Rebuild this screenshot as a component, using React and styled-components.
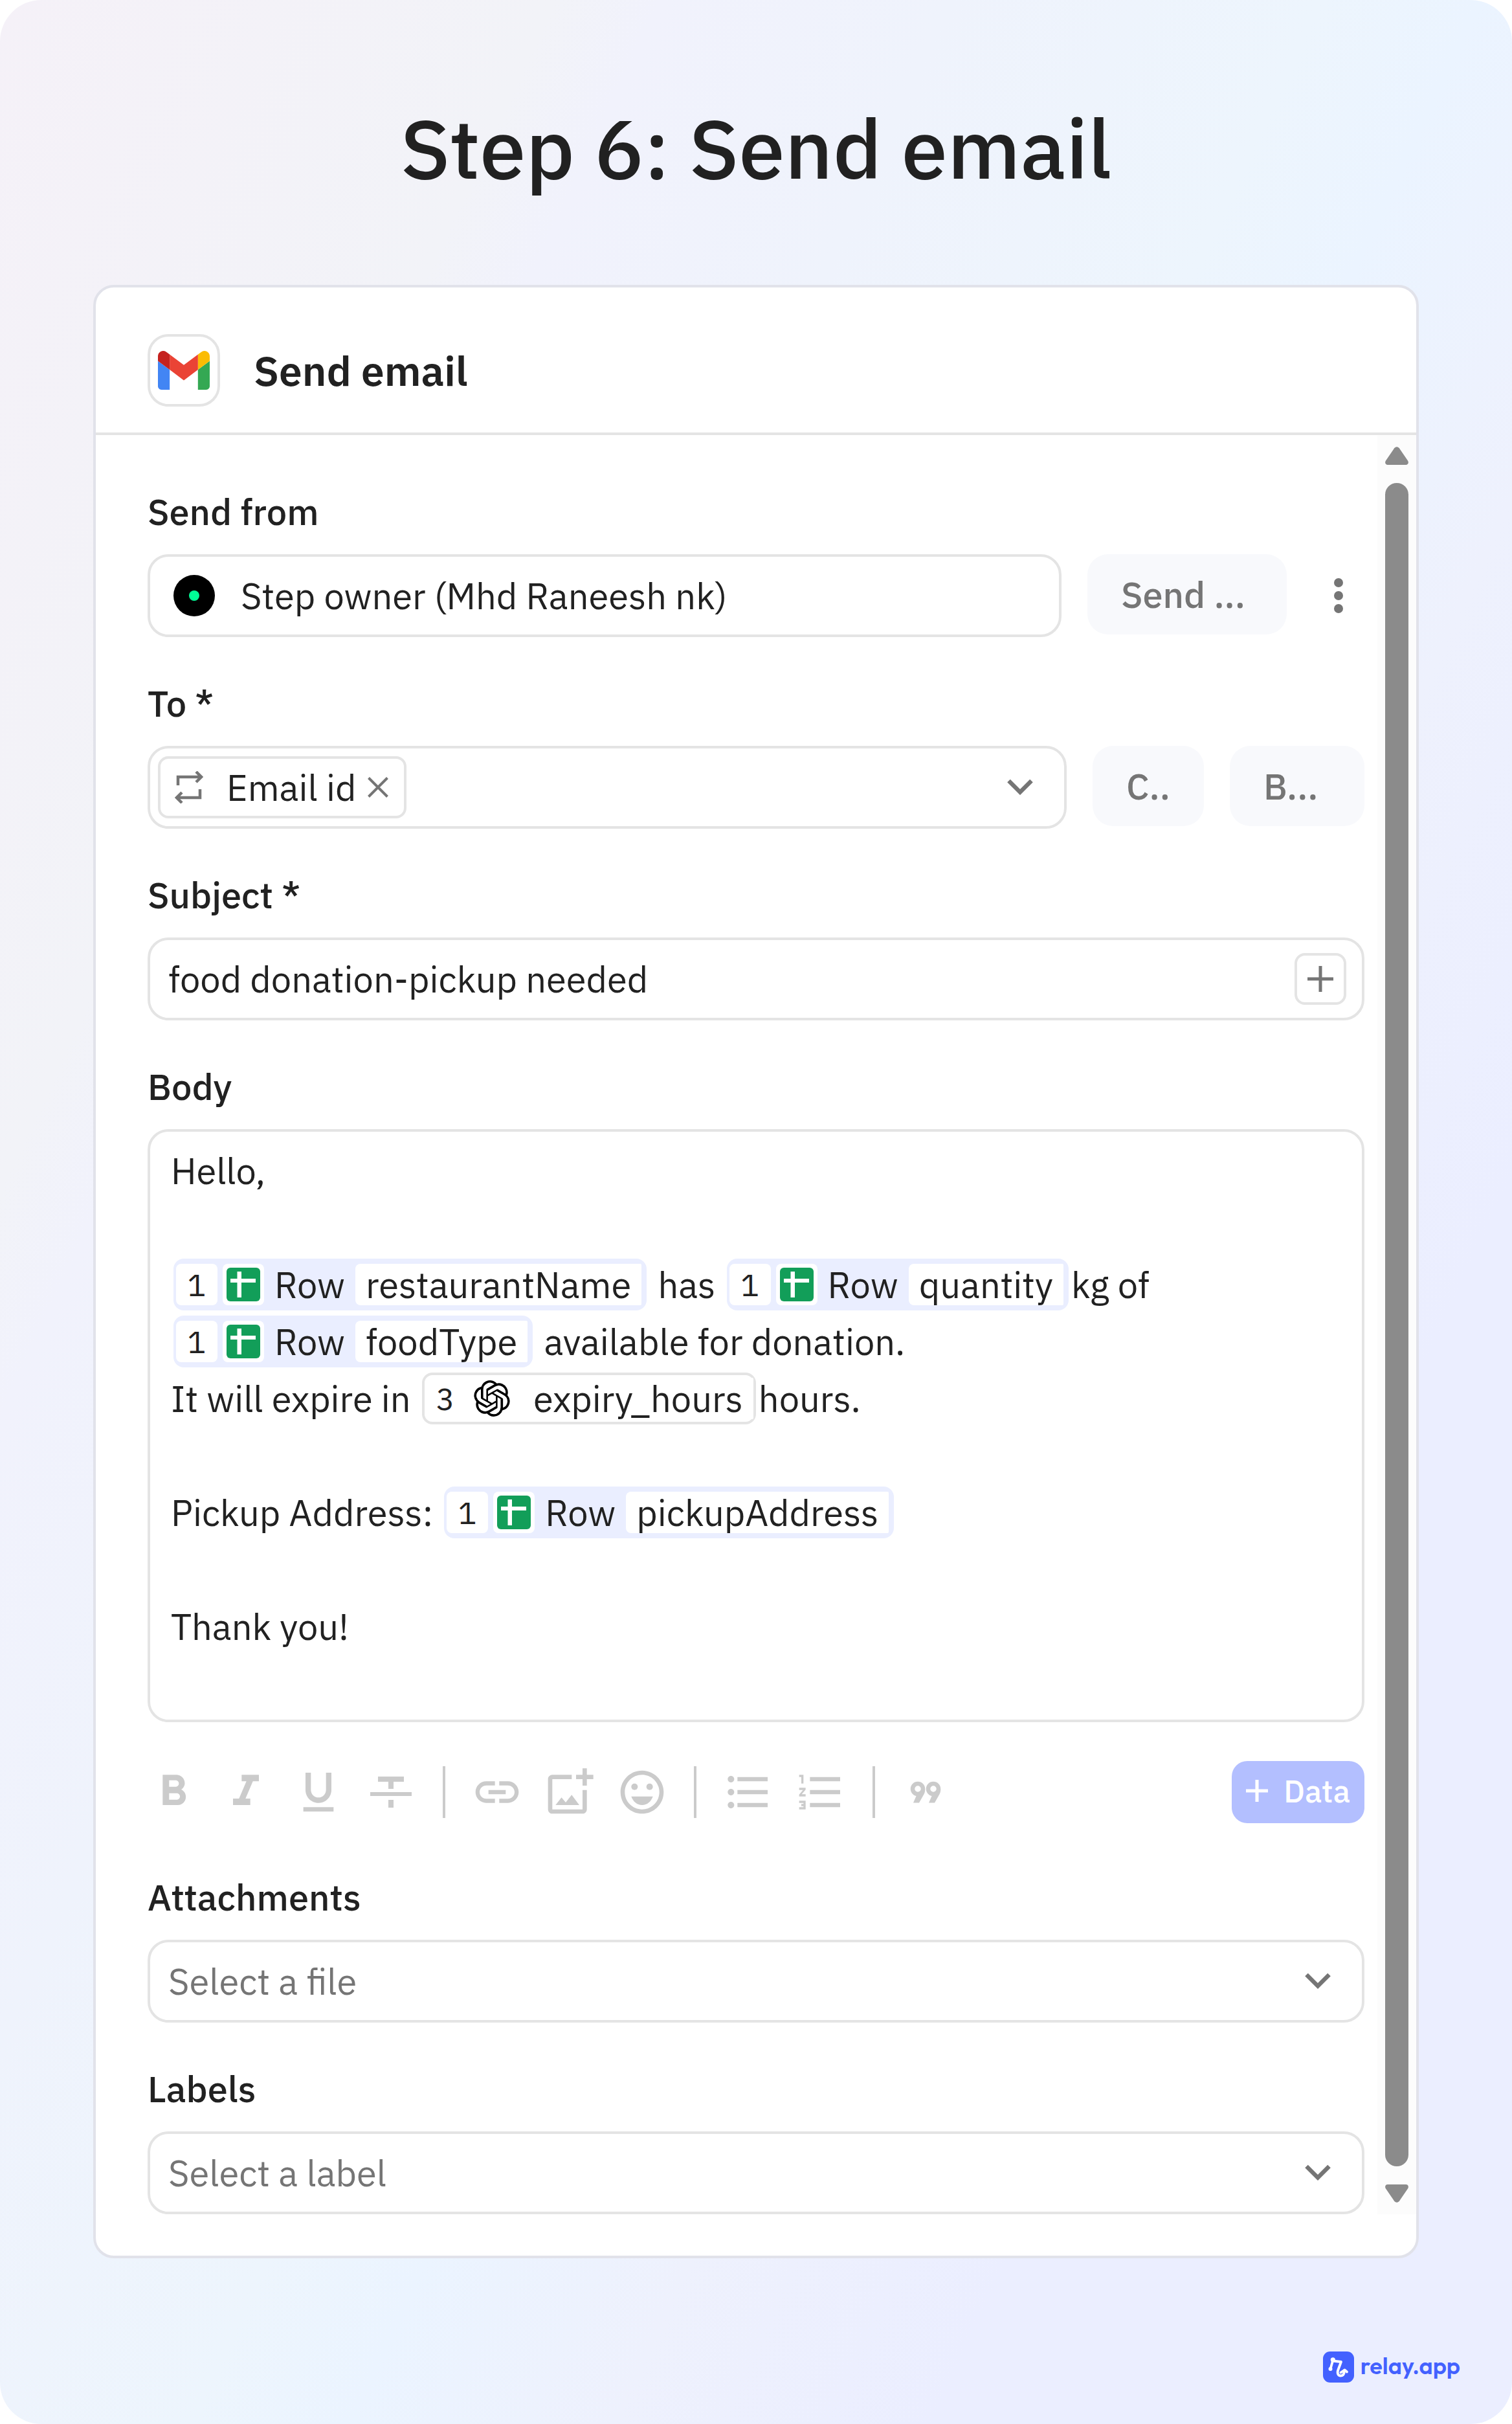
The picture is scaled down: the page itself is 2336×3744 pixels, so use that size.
import React from "react";
import styled, { createGlobalStyle, css } from "styled-components";
import {
  MdFormatBold,
  MdFormatItalic,
  MdFormatUnderlined,
  MdInsertLink,
  MdOutlineEmojiEmotions,
  MdFormatListBulleted,
  MdFormatListNumbered,
} from "react-icons/md";
import { SiOpenai } from "react-icons/si";

const ink = "#212121";
const muted = "#757575";
const line = "#e4e4e4";
const disabled = "#cbcbcb";

const GlobalStyle = createGlobalStyle`
  *, *::before, *::after { box-sizing: border-box; }
  body {
    margin: 0;
    background: #fff;
    color: ${ink};
    font-family: "IBM Plex Sans", Roboto, "Noto Sans", sans-serif;
    font-size: 56px;
  }
  button, input, select { font: inherit; color: inherit; }
  button { cursor: pointer; }
  svg { display: block; flex: none; }
`;

const Page = styled.main`
  min-height: 100vh;
  padding: 148px 144px 64px;
  border-radius: 64px;
  background: linear-gradient(
    115deg,
    #f5f1f8 0%,
    #f2f3f8 21%,
    #f1f2fc 25%,
    #eff3fc 36%,
    #edf5fd 50%,
    #ebf4ff 56%,
    #eef1fd 66%,
    #ebeeff 78%,
    #ebeeff 100%
  );
`;

const Heading = styled.h1`
  margin: 0 0 132px;
  font-size: 128px;
  line-height: 160px;
  font-weight: 500;
  text-align: center;
`;

const Card = styled.section`
  padding-bottom: 64px;
  border: 4px solid #e1e2ea;
  border-radius: 32px;
  background: #fff;
`;

const CardHeader = styled.header`
  display: flex;
  align-items: center;
  gap: 52px;
  padding: 72px 80px 40px;
  border-bottom: 4px solid ${line};
`;

const AppIcon = styled.div`
  display: grid;
  place-items: center;
  width: 112px;
  height: 112px;
  border: 4px solid ${line};
  border-radius: 32px;
`;

const CardTitle = styled.h2`
  margin: 0;
  font-size: 64px;
  line-height: 80px;
  font-weight: 600;
`;

const ScrollArea = styled.div`
  display: flex;
  gap: 20px;
`;

const Form = styled.form`
  display: flex;
  flex: 1;
  min-width: 0;
  flex-direction: column;
  gap: 64px;
  padding: 80px 0 0 80px;
`;

const Section = styled.div`
  display: flex;
  flex-direction: column;
`;

const Label = styled.label`
  margin-bottom: 28px;
  line-height: 76px;
  font-weight: 500;
`;

const Row = styled.div`
  display: flex;
  align-items: flex-start;
  gap: 40px;
`;

const boxed = css`
  border: 4px solid ${line};
  border-radius: 32px;
  background: #fff;
`;

const OwnerButton = styled.button`
  ${boxed}
  display: flex;
  flex: 1;
  align-items: center;
  gap: 40px;
  height: 128px;
  padding: 0 36px;
  text-align: left;
`;

const Avatar = styled.span`
  display: grid;
  place-items: center;
  width: 64px;
  height: 64px;
  border-radius: 50%;
  background: #000;

  &::after {
    content: "";
    width: 16px;
    height: 16px;
    border-radius: 50%;
    background: #00ff97;
  }
`;

const Field = styled.div`
  ${boxed}
  display: flex;
  flex: 1 1 auto;
  align-items: center;
  min-width: 0;
  height: 128px;
  padding: ${(p) => (p.$tagged ? "0 28px 0 12px" : "0 24px 0 28px")};
`;

const TextInput = styled.input`
  flex: 1;
  min-width: 0;
  padding: 0;
  border: 0;
  outline: 0;
  background: none;
`;

const SoftButton = styled.button`
  width: ${(p) => p.$width}px;
  height: 124px;
  padding: 0 0 0 52px;
  border: 0;
  border-radius: 32px;
  background: #f8f9fc;
  color: ${muted};
  font-weight: 500;
  text-align: left;
  white-space: nowrap;
`;

const IconButton = styled.button`
  display: grid;
  place-items: center;
  width: 80px;
  height: ${(p) => (p.$tall ? "128px" : "80px")};
  padding: 0;
  border: 0;
  background: none;
  color: ${(p) => (p.$faint ? disabled : muted)};
`;

const AddButton = styled(IconButton)`
  border: 4px solid ${line};
  border-radius: 16px;
`;

const Tag = styled.span`
  display: flex;
  align-items: center;
  height: 96px;
  padding: 0 24px 0 22px;
  border: 4px solid ${line};
  border-radius: 16px;
  color: ${muted};
  white-space: nowrap;
`;

const TagText = styled.span`
  margin: 0 18px 0 36px;
  color: ${ink};
`;

const TagRemove = styled.button`
  padding: 0;
  border: 0;
  background: none;
`;

const SelectWrap = styled.div`
  display: grid;
  align-items: center;
  color: ${muted};

  > * { grid-area: 1 / 1; }
  > svg {
    justify-self: end;
    margin-right: 52px;
    pointer-events: none;
  }
`;

const Select = styled.select`
  ${boxed}
  width: 100%;
  height: 128px;
  padding: 0 112px 0 28px;
  appearance: none;
`;

const Editor = styled.div`
  ${boxed}
  min-height: 916px;
  padding: 16px 32px;
  outline: 0;
`;

const EditorLine = styled.div`
  display: flex;
  flex-wrap: wrap;
  align-items: center;
  min-height: 88px;
  line-height: 88px;
  white-space: pre;
`;

const DataChip = styled.span`
  display: inline-flex;
  align-items: center;
  height: 80px;
  margin: 0 4px;
  line-height: 64px;
  border-radius: 16px;
  ${(p) =>
    p.$outlined
      ? css`
          border: 4px solid ${line};
        `
      : css`
          padding: 8px 8px 8px 4px;
          background: #eaeeff;
        `}
`;

const ChipCell = styled.span`
  display: grid;
  place-items: center;
  width: 64px;
  height: 64px;
  margin-right: 8px;
  border-radius: 8px;
  background: #fff;
  font-size: 48px;
`;

const ChipSource = styled.span`
  margin: 0 8px;
`;

const ChipName = styled.span`
  height: 64px;
  margin-left: 8px;
  padding: 0 16px;
  border-radius: 8px 2px 2px 8px;
  background: #fff;
`;

const Toolbar = styled.div`
  display: flex;
  align-items: center;
  gap: 32px;
  margin: 60px 0 12px;
`;

const Divider = styled.span`
  width: 4px;
  height: 80px;
  margin: 0 8px;
  background: ${disabled};
`;

const DataButton = styled.button`
  display: flex;
  align-items: center;
  gap: 24px;
  height: 96px;
  margin-left: auto;
  padding: 0 22px 4px;
  border: 0;
  border-radius: 24px;
  background: #b3bfff;
  color: #fff;
  font-size: 48px;
  font-weight: 500;
`;

const ScrollTrack = styled.div`
  display: flex;
  flex-direction: column;
  align-items: center;
  gap: 28px;
  width: 60px;
  padding: 18px 0;
  background: #fcfcfc;
  color: #8b8b8b;
`;

const ScrollThumb = styled.div`
  flex: 1;
  width: 36px;
  border-radius: 18px;
  background: currentColor;
`;

const Footer = styled.footer`
  display: flex;
  justify-content: flex-end;
  margin: 144px -64px 0 0;
`;

const Brand = styled.a`
  display: flex;
  align-items: center;
  gap: 10px;
  color: #4361ff;
  font-family: Outfit, Lato, sans-serif;
  font-size: 36px;
  line-height: 44px;
  font-weight: 600;
  text-decoration: none;
`;

const BrandName = styled.span`
  height: 48px;
`;

const GmailLogo = () => (
  <svg width="80" height="60" viewBox="52 42 88 66" aria-hidden="true">
    <path fill="#4285f4" d="M58 108h14V74L52 59v43c0 3.32 2.69 6 6 6" />
    <path fill="#34a853" d="M120 108h14c3.32 0 6-2.69 6-6V59l-20 15" />
    <path fill="#fbbc04" d="M120 48v26l20-15v-8c0-7.42-8.47-11.65-14.4-7.2" />
    <path fill="#ea4335" d="M72 74V48l24 18 24-18v26L96 92" />
    <path fill="#c5221f" d="M52 51v8l20 15V48l-5.6-4.2c-5.94-4.45-14.4-.22-14.4 7.2" />
  </svg>
);

const SheetsIcon = () => (
  <svg width="52" height="52" viewBox="0 0 52 52" aria-hidden="true">
    <rect width="52" height="52" rx="6" fill="#129e59" />
    <path d="M16.5 6h6.5v11h22v6h-22v23h-6.5V23H6v-6h10.500z" fill="#fff" />
  </svg>
);

const KebabIcon = () => (
  <svg width="14" height="54" viewBox="0 0 14 54" fill="currentColor" aria-hidden="true">
    <circle cx="7" cy="7" r="7" />
    <circle cx="7" cy="27" r="7" />
    <circle cx="7" cy="47" r="7" />
  </svg>
);

const Chevron = () => (
  <svg width="40" height="26" viewBox="0 0 40 26" aria-hidden="true">
    <path d="M2.500 3L20 20.500 37.500 3" fill="none" stroke="currentColor" strokeWidth="6.500" />
  </svg>
);

const LoopIcon = () => (
  <svg width="44" height="50" viewBox="0 0 44 50" fill="none" stroke="currentColor" strokeWidth="4.500" aria-hidden="true">
    <path d="M5 22V9h36M33 1l8 8-8 8M39 28v13H3M11 33l-8 8 8 8" />
  </svg>
);

const CrossIcon = () => (
  <svg width="32" height="32" viewBox="0 0 32 32" aria-hidden="true">
    <path d="M1.500 1.500l29 29M30.500 1.500l-29 29" stroke="currentColor" strokeWidth="4" />
  </svg>
);

const PlusIcon = ({ size, weight }) => (
  <svg width={size} height={size} viewBox="0 0 40 40" aria-hidden="true">
    <path d="M20 0v40M0 20h40" stroke="currentColor" strokeWidth={weight} />
  </svg>
);

const StrikeIcon = () => (
  <svg width="80" height="80" viewBox="0 0 80 80" fill="currentColor" aria-hidden="true">
    <path d="M20 16h40v8H44v11h-8V24H20zM8 40h64v6H8zM36 52h8v12h-8z" />
  </svg>
);

const AddImageIcon = () => (
  <svg width="80" height="80" viewBox="0 0 24 24" fill="currentColor" aria-hidden="true">
    <path d="M18 20H4V6h9V4H4c-1.100 0-2 .9-2 2v14c0 1.100.9 2 2 2h14c1.100 0 2-.9 2-2v-9h-2v9zM20 4V1h-2v3h-3v2h3v3h2V6h3V4h-3zM10.210 16.830l-1.960-2.360L5.500 18h11l-3.540-4.710z" />
  </svg>
);

const QuoteIcon = () => (
  <svg width="80" height="80" viewBox="0 0 80 80" aria-hidden="true">
    <g fill="none" stroke="currentColor" strokeWidth="6.500">
      <circle cx="26" cy="35" r="8" />
      <circle cx="50" cy="35" r="8" />
    </g>
    <g fill="currentColor">
      <path d="M19 56.500l5-11.500 10-7 3.300-2.500c0 3-.6 5.500-1.800 7.800L28 56.500z" />
      <path d="M43 56.500l5-11.500 10-7 3.300-2.500c0 3-.6 5.500-1.800 7.800L52 56.500z" />
    </g>
  </svg>
);

const ScrollArrow = ({ down }) => (
  <svg width="36" height="28" viewBox="0 0 36 28" aria-hidden="true">
    <path
      d={
        down
          ? "M4 0h28c3.500 0 5 3.500 3 6.500L23 24c-2.500 5-7.500 5-10 0L1 6.500C-1 3.500.5 0 4 0z"
          : "M4 28h28c3.500 0 5-3.500 3-6.500L23 4c-2.500-5-7.500-5-10 0L1 21.500C-1 24.500.5 28 4 28z"
      }
      fill="currentColor"
    />
  </svg>
);

const RelayLogo = () => (
  <svg width="48" height="48" viewBox="0 0 48 48" aria-hidden="true">
    <rect width="48" height="48" rx="11" fill="#4361ff" />
    <g fill="none" stroke="#fff" strokeWidth="3.800" strokeLinejoin="round" strokeLinecap="round">
      <path d="M11.500 27l3.500-12.500 13 1.500-4.500 12c-2 5.500-.5 9.500 4 9.500 4 0 5.500-3.500 5.500-8.500" />
      <path d="M27.500 32.500l6-4 3.500 3" />
    </g>
    <circle cx="11.500" cy="27" r="3" fill="#fff" />
    <circle cx="15.300" cy="12.800" r="3.600" fill="#fff" />
  </svg>
);

const RowChip = ({ name }) => (
  <DataChip contentEditable={false}>
    <ChipCell>1</ChipCell>
    <ChipCell>
      <SheetsIcon />
    </ChipCell>
    <ChipSource>Row</ChipSource>
    <ChipName>{name}</ChipName>
  </DataChip>
);

const formatTools = [
  ["Bold", MdFormatBold],
  ["Italic", MdFormatItalic],
  ["Underline", MdFormatUnderlined],
  ["Strikethrough", StrikeIcon],
  null,
  ["Link", MdInsertLink],
  ["Image", AddImageIcon],
  ["Emoji", MdOutlineEmojiEmotions],
  null,
  ["Bulleted list", MdFormatListBulleted],
  ["Numbered list", MdFormatListNumbered],
  null,
  ["Quote", QuoteIcon],
];

const Picker = ({ id, label, placeholder }) => (
  <Section>
    <Label htmlFor={id}>{label}</Label>
    <SelectWrap>
      <Select id={id} defaultValue="">
        <option value="">{placeholder}</option>
      </Select>
      <Chevron />
    </SelectWrap>
  </Section>
);

export default function App() {
  return (
    <>
      <GlobalStyle />
      <Page>
        <Heading>Step 6: Send email</Heading>
        <Card>
          <CardHeader>
            <AppIcon>
              <GmailLogo />
            </AppIcon>
            <CardTitle>Send email</CardTitle>
          </CardHeader>
          <ScrollArea>
            <Form onSubmit={(e) => e.preventDefault()}>
              <Section>
                <Label htmlFor="from">Send from</Label>
                <Row>
                  <OwnerButton id="from" type="button">
                    <Avatar />
                    Step owner (Mhd Raneesh nk)
                  </OwnerButton>
                  <SoftButton type="button" $width={308}>
                    Send ...
                  </SoftButton>
                  <IconButton type="button" $tall aria-label="More options">
                    <KebabIcon />
                  </IconButton>
                </Row>
              </Section>

              <Section>
                <Label htmlFor="to">To *</Label>
                <Row>
                  <Field $tagged>
                    <Tag>
                      <LoopIcon />
                      <TagText>Email id</TagText>
                      <TagRemove type="button" aria-label="Remove Email id">
                        <CrossIcon />
                      </TagRemove>
                    </Tag>
                    <TextInput id="to" />
                    <IconButton type="button" aria-label="Show recipients">
                      <Chevron />
                    </IconButton>
                  </Field>
                  <SoftButton type="button" $width={172}>
                    C..
                  </SoftButton>
                  <SoftButton type="button" $width={208}>
                    B...
                  </SoftButton>
                </Row>
              </Section>

              <Section>
                <Label htmlFor="subject">Subject *</Label>
                <Field>
                  <TextInput id="subject" defaultValue="food donation-pickup needed" />
                  <AddButton type="button" aria-label="Insert data">
                    <PlusIcon size={40} weight={5} />
                  </AddButton>
                </Field>
              </Section>

              <Section>
                <Label as="div" id="body-label">
                  Body
                </Label>
                <Editor
                  role="textbox"
                  aria-multiline="true"
                  aria-labelledby="body-label"
                  contentEditable
                  suppressContentEditableWarning
                  spellCheck={false}
                >
                  <EditorLine>Hello,</EditorLine>
                  <EditorLine />
                  <EditorLine>
                    <RowChip name="restaurantName" />
                    <span>{" has "}</span>
                    <RowChip name="quantity" />
                    <span>kg of</span>
                  </EditorLine>
                  <EditorLine>
                    <RowChip name="foodType" />
                    <span>{" available for donation."}</span>
                  </EditorLine>
                  <EditorLine>
                    <span>{"It will expire in "}</span>
                    <DataChip $outlined contentEditable={false}>
                      <ChipCell>3</ChipCell>
                      <ChipCell>
                        <SiOpenai size={56} color="#000" />
                      </ChipCell>
                      <ChipName>expiry_hours</ChipName>
                    </DataChip>
                    <span>hours.</span>
                  </EditorLine>
                  <EditorLine />
                  <EditorLine>
                    <span>{"Pickup Address: "}</span>
                    <RowChip name="pickupAddress" />
                  </EditorLine>
                  <EditorLine />
                  <EditorLine>Thank you!</EditorLine>
                </Editor>
                <Toolbar role="toolbar" aria-label="Formatting">
                  {formatTools.map((tool, i) => {
                    if (!tool) return <Divider key={i} />;
                    const [name, Icon] = tool;
                    return (
                      <IconButton key={name} type="button" $faint aria-label={name}>
                        <Icon size={80} />
                      </IconButton>
                    );
                  })}
                  <DataButton type="button">
                    <PlusIcon size={34} weight={6} />
                    Data
                  </DataButton>
                </Toolbar>
              </Section>

              <Picker id="attachments" label="Attachments" placeholder="Select a file" />
              <Picker id="labels" label="Labels" placeholder="Select a label" />
            </Form>
            <ScrollTrack aria-hidden="true">
              <ScrollArrow />
              <ScrollThumb />
              <ScrollArrow down />
            </ScrollTrack>
          </ScrollArea>
        </Card>
        <Footer>
          <Brand href="#">
            <RelayLogo />
            <BrandName>relay.app</BrandName>
          </Brand>
        </Footer>
      </Page>
    </>
  );
}
